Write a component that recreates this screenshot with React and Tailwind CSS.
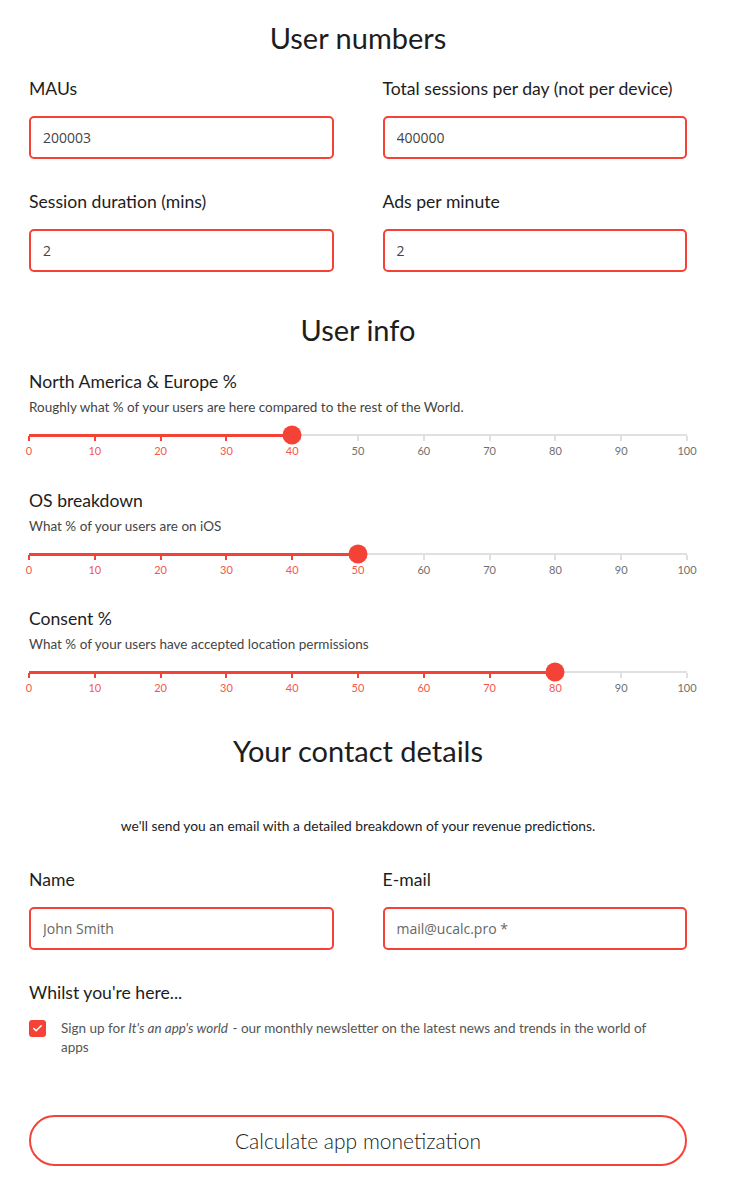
import { useState } from "react";
import { Check } from "lucide-react";

function Field({ label, value, placeholder }) {
  return (
    <div className="flex flex-col">
      <label className="text-[17.6px] leading-[24px] text-[#1d1d1d]">{label}</label>
      <input
        type="text"
        defaultValue={value}
        placeholder={placeholder}
        className="mt-[15px] h-[43px] rounded-[5px] border-2 border-[#f44336] px-[12px] text-[14px] text-[#444] placeholder:text-[#666] font-['Open_Sans',sans-serif] outline-none"
      />
    </div>
  );
}

function Slider({ title, hint, value, className = "" }) {
  const marks = [0, 10, 20, 30, 40, 50, 60, 70, 80, 90, 100];
  return (
    <div className={className}>
      <div className="text-[17.6px] leading-[24px] text-[#1d1d1d]">{title}</div>
      <div className="mt-[4px] text-[13.5px] leading-[18px] text-[#444]">{hint}</div>

      {/* track */}
      <div className="relative mt-[18px] h-[2px] bg-[#e0e0e0]">
        <div
          className="absolute left-0 top-0 h-[2px] bg-[#f44336] border-b border-dotted border-[#f44336] box-content"
          style={{ width: `${value}%` }}
        />
        <div
          className="absolute top-1/2 h-[19px] w-[19px] -translate-x-1/2 -translate-y-1/2 rounded-full bg-[#f44336]"
          style={{ left: `${value}%` }}
        />
      </div>

      {/* ticks + labels */}
      <div className="flex justify-between">
        {marks.map((m) => {
          const on = m <= value;
          return (
            <div key={m} className="flex w-0 flex-col items-center">
              <div className={`h-[5px] w-[2px] ${on ? "bg-[#f44336]" : "bg-[#e0e0e0]"}`} />
              <span
                className={`mt-[3px] whitespace-nowrap text-[11px] leading-[14px] ${
                  on ? "text-[#f4574b]" : "text-[#707070]"
                }`}
              >
                {m}
              </span>
            </div>
          );
        })}
      </div>
    </div>
  );
}

export default function App() {
  const [agree, setAgree] = useState(true);

  return (
    <div className="min-h-screen bg-white font-['Lato',sans-serif] text-[#1d1d1d]">
      <div className="ml-[29px] w-[658px] pt-[21px] pb-[20px]">
        {/* User numbers */}
        <h2 className="text-center text-[29px] leading-[34px] text-[#1d1d1d]">User numbers</h2>

        <div className="mt-[22px] grid grid-cols-2 gap-x-[49px] gap-y-[31px]">
          <Field label="MAUs" value="200003" />
          <Field label="Total sessions per day (not per device)" value="400000" />
          <Field label="Session duration (mins)" value="2" />
          <Field label="Ads per minute" value="2" />
        </div>

        {/* User info */}
        <h2 className="mt-[41px] text-center text-[29px] leading-[34px] text-[#1d1d1d]">User info</h2>

        <Slider
          className="mt-[23px]"
          title="North America & Europe %"
          hint="Roughly what % of your users are here compared to the rest of the World."
          value={40}
        />
        <Slider
          className="mt-[31px]"
          title="OS breakdown"
          hint="What % of your users are on iOS"
          value={50}
        />
        <Slider
          className="mt-[30px]"
          title="Consent %"
          hint="What % of your users have accepted location permissions"
          value={80}
        />

        {/* Contact */}
        <h2 className="mt-[39px] text-center text-[29px] leading-[34px] text-[#1d1d1d]">
          Your contact details
        </h2>
        <p className="mt-[49px] text-center text-[13.8px] leading-[18px] text-[#222]">
          we'll send you an email with a detailed breakdown of your revenue predictions.
        </p>

        <div className="mt-[33px] grid grid-cols-2 gap-x-[49px]">
          <Field label="Name" placeholder="John Smith" />
          <Field label="E-mail" placeholder="mail@ucalc.pro *" />
        </div>

        <div className="mt-[31px] text-[17.6px] leading-[24px] text-[#1d1d1d]">Whilst you're here...</div>

        <label className="mt-[14px] flex items-start gap-[15px] cursor-pointer">
          <button
            type="button"
            onClick={() => setAgree(!agree)}
            className={`mt-[1px] flex h-[17px] w-[17px] shrink-0 items-center justify-center rounded-[3px] ${
              agree ? "bg-[#f44336]" : "border border-[#ccc] bg-white"
            }`}
          >
            {agree && <Check size={11} strokeWidth={3.5} color="#fff" />}
          </button>
          <span className="max-w-[605px] text-[13.5px] leading-[19px] text-[#555]">
            Sign up for <em className="pr-[1px]">It's an app's world</em> - our monthly newsletter on the latest news and trends in the world of apps
          </span>
        </label>

        <button
          type="button"
          className="mt-[58px] flex h-[51px] w-full items-center justify-center rounded-full border-2 border-[#f44336] bg-white text-[21px] font-light text-[#222]"
        >
          Calculate app monetization
        </button>
      </div>
    </div>
  );
}
